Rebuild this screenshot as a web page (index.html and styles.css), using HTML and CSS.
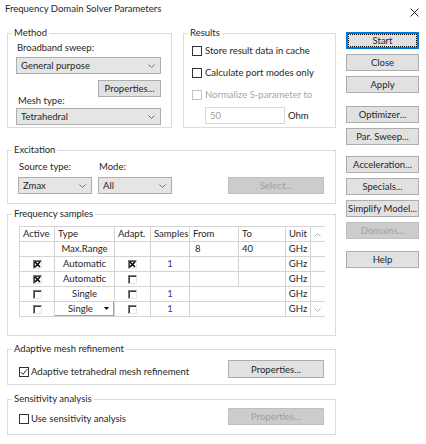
FILE: index.html
```html
<!DOCTYPE html>
<html>
<head>
<meta charset="utf-8">
<title>Frequency Domain Solver Parameters</title>
<link rel="stylesheet" href="styles.css">
</head>
<body>
<div class="dialog">
  <div class="titlebar">
    <span class="title">Frequency Domain Solver Parameters</span>
    <svg class="close" width="9" height="9" viewBox="0 0 9 9"><path d="M0.5 0.5 L8.5 8.5 M8.5 0.5 L0.5 8.5" stroke="#111" stroke-width="0.9" fill="none"/></svg>
  </div>
  <div class="main">
    <div class="left">
      <div class="top-row">
        <fieldset class="group method">
          <legend>Method</legend>
          <div class="gbody">
            <div class="lbl first">Broadband sweep:</div>
            <div class="combo"><span>General purpose</span><svg width="7" height="4" viewBox="0 0 7 4"><polyline points="0.5,0.5 3.5,3.5 6.5,0.5" fill="none" stroke="#707070"/></svg></div>
            <div class="mesh-row">
              <span class="lbl">Mesh type:</span>
              <button class="btn small-props">Properties...</button>
            </div>
            <div class="combo tight"><span>Tetrahedral</span><svg width="7" height="4" viewBox="0 0 7 4"><polyline points="0.5,0.5 3.5,3.5 6.5,0.5" fill="none" stroke="#707070"/></svg></div>
          </div>
        </fieldset>
        <fieldset class="group results">
          <legend>Results</legend>
          <div class="gbody">
            <label class="chk-row first"><span class="cb"></span>Store result data in cache</label>
            <label class="chk-row"><span class="cb"></span>Calculate port modes only</label>
            <label class="chk-row disabled"><span class="cb"></span>Normalize S-parameter to</label>
            <div class="ohm-row"><span class="textbox">50</span><span class="ohm">Ohm</span></div>
          </div>
        </fieldset>
      </div>

      <fieldset class="group excitation">
        <legend>Excitation</legend>
        <div class="gbody exc-row">
          <div class="exc-col">
            <span class="lbl">Source type:</span>
            <div class="combo"><span>Zmax</span><svg width="7" height="4" viewBox="0 0 7 4"><polyline points="0.5,0.5 3.5,3.5 6.5,0.5" fill="none" stroke="#707070"/></svg></div>
          </div>
          <div class="exc-col">
            <span class="lbl">Mode:</span>
            <div class="combo"><span>All</span><svg width="7" height="4" viewBox="0 0 7 4"><polyline points="0.5,0.5 3.5,3.5 6.5,0.5" fill="none" stroke="#707070"/></svg></div>
          </div>
          <button class="btn disabled wide-btn">Select...</button>
        </div>
      </fieldset>

      <fieldset class="group freq">
        <legend>Frequency samples</legend>
        <div class="gbody">
          <table class="grid">
            <colgroup>
              <col class="c-active"><col class="c-type"><col class="c-adapt"><col class="c-samples"><col class="c-from"><col class="c-to"><col class="c-unit"><col class="c-scroll">
            </colgroup>
            <thead>
              <tr><th>Active</th><th>Type</th><th>Adapt.</th><th>Samples</th><th>From</th><th>To</th><th>Unit</th><th class="scroll"><svg width="7" height="4" viewBox="0 0 7 4"><polyline points="0.5,3.5 3.5,0.5 6.5,3.5" fill="none" stroke="#b0b0b0"/></svg></th></tr>
            </thead>
            <tbody>
              <tr><td></td><td class="ctr">Max.Range</td><td></td><td></td><td class="from">8</td><td class="to">40</td><td class="ctr">GHz</td><td class="scroll"></td></tr>
              <tr><td class="ctr"><span class="cb3d"><svg width="7" height="7" viewBox="0 0 7 7"><path d="M1 1 L6 6 M6 1 L1 6" stroke="#000" stroke-width="1.5"/></svg></span></td><td class="ctr">Automatic</td><td class="ctr"><span class="cb3d"><svg width="7" height="7" viewBox="0 0 7 7"><path d="M1 1 L6 6 M6 1 L1 6" stroke="#000" stroke-width="1.5"/></svg></span></td><td class="ctr num">1</td><td></td><td></td><td class="ctr">GHz</td><td class="scroll"></td></tr>
              <tr><td class="ctr"><span class="cb3d"><svg width="7" height="7" viewBox="0 0 7 7"><path d="M1 1 L6 6 M6 1 L1 6" stroke="#000" stroke-width="1.5"/></svg></span></td><td class="ctr">Automatic</td><td class="ctr"><span class="cb3d"></span></td><td></td><td></td><td></td><td class="ctr">GHz</td><td class="scroll"></td></tr>
              <tr><td class="ctr"><span class="cb3d"></span></td><td class="ctr">Single</td><td class="ctr"><span class="cb3d"></span></td><td class="ctr num">1</td><td colspan="2"></td><td class="ctr">GHz</td><td class="scroll"></td></tr>
              <tr><td class="ctr"><span class="cb3d"></span></td><td class="edit"><span class="cell-combo"><span class="cc-text">Single</span><svg width="5" height="3" viewBox="0 0 5 3"><polygon points="0,0 5,0 2.5,3" fill="#000"/></svg></span></td><td class="ctr"><span class="cb3d"></span></td><td class="ctr num">1</td><td colspan="2"></td><td class="ctr">GHz</td><td class="scroll"><svg width="7" height="4" viewBox="0 0 7 4"><polyline points="0.5,0.5 3.5,3.5 6.5,0.5" fill="none" stroke="#b0b0b0"/></svg></td></tr>
            </tbody>
          </table>
        </div>
      </fieldset>

      <fieldset class="group adaptive">
        <legend>Adaptive mesh refinement</legend>
        <div class="gbody opt-row">
          <label class="chk-row"><span class="cb"><svg width="8" height="8" viewBox="0 0 8 8"><polyline points="0.8,4 3,6.3 7.2,1.2" fill="none" stroke="#333" stroke-width="1"/></svg></span>Adaptive tetrahedral mesh refinement</label>
          <button class="btn wide-btn tall-btn">Properties...</button>
        </div>
      </fieldset>

      <fieldset class="group sensitivity">
        <legend>Sensitivity analysis</legend>
        <div class="gbody opt-row">
          <label class="chk-row"><span class="cb"></span>Use sensitivity analysis</label>
          <button class="btn disabled wide-btn">Properties...</button>
        </div>
      </fieldset>
    </div>

    <div class="right">
      <button class="btn side focus">Start</button>
      <button class="btn side">Close</button>
      <button class="btn side">Apply</button>
      <button class="btn side gap-13">Optimizer...</button>
      <button class="btn side">Par. Sweep...</button>
      <button class="btn side gap-11">Acceleration...</button>
      <button class="btn side">Specials...</button>
      <button class="btn side">Simplify Model...</button>
      <button class="btn side disabled">Domains...</button>
      <button class="btn side gap-12">Help</button>
    </div>
  </div>
</div>
</body>
</html>
```

FILE: styles.css
```css
* { box-sizing: border-box; }

html, body {
  margin: 0;
  padding: 0;
  background: #ffffff;
}

body {
  width: 426px;
  height: 444px;
  overflow: hidden;
  font-family: Lato, Roboto, "Liberation Sans", Arial, sans-serif;
  font-size: 9.5px;
  font-weight: 400;
  color: #262626;
}

.dialog {
  width: 426px;
  height: 444px;
}

.titlebar {
  height: 27px;
  display: flex;
  justify-content: space-between;
  align-items: flex-start;
  padding: 3px 7px 0 5px;
}

.title {
  line-height: 12px;
}

.close {
  margin-top: 5px;
}

.main {
  display: flex;
  padding-left: 7px;
}

.left {
  width: 329px;
  display: flex;
  flex-direction: column;
}

.right {
  width: 73px;
  margin-left: 10px;
  padding-top: 5px;
  display: flex;
  flex-direction: column;
}

/* group boxes */
.group {
  margin: 0;
  padding: 0;
  border: 1px solid #dcdcdc;
  min-width: 0;
}

.group legend {
  margin-left: 4px;
  padding: 0 2px;
  line-height: 12px;
}

.lbl {
  line-height: 12px;
  padding-left: 1px;
}

.top-row {
  display: flex;
}

.group.method {
  width: 165px;
}

.method .gbody {
  padding: 0 10px 2px 8px;
}

.method .lbl.first {
  margin-top: 3px;
}

.combo {
  height: 17px;
  border: 1px solid #adadad;
  background: #e5e5e5;
  display: flex;
  align-items: center;
  justify-content: space-between;
  padding: 0 5px 0 4px;
  margin-top: 3px;
  line-height: 12px;
}

.combo.tight {
  margin-top: 1px;
}

.mesh-row {
  height: 27px;
  margin-top: 6px;
  display: flex;
  justify-content: space-between;
}

.mesh-row .lbl {
  align-self: flex-end;
  padding-left: 2px;
}

.btn {
  height: 17px;
  border: 1px solid #adadad;
  background: #e1e1e1;
  font-family: inherit;
  font-size: 9.5px;
  font-weight: 400;
  color: #262626;
  padding: 0;
  margin: 0;
  line-height: 15px;
  text-align: center;
}

.btn.disabled {
  background: #cccccc;
  border-color: #bfbfbf;
  color: #a0a0a0;
}

.small-props {
  width: 63px;
}

.group.results {
  width: 153px;
  margin-left: 11px;
}

.results .gbody {
  padding: 0 8px 0 8px;
}

.chk-row {
  display: flex;
  align-items: center;
  line-height: 12px;
}

.results .chk-row {
  margin-top: 10px;
}

.results .chk-row.first {
  margin-top: 6px;
}

.chk-row.disabled {
  color: #a6a6a6;
}

.cb {
  width: 10px;
  height: 10px;
  border: 1px solid #333;
  background: #fff;
  margin-right: 3px;
  display: flex;
  align-items: center;
  justify-content: center;
  flex-shrink: 0;
}

.chk-row.disabled .cb {
  border-color: #c4c4c4;
}

.ohm-row {
  display: flex;
  align-items: center;
  margin-top: 6px;
  padding-left: 13px;
}

.textbox {
  width: 80px;
  height: 17px;
  border: 1px solid #d9d9d9;
  color: #a0a0a0;
  padding-left: 4px;
  line-height: 15px;
}

.ohm {
  margin-left: 3px;
}

/* excitation */
.group.excitation {
  margin-top: 16px;
}

.exc-row {
  display: flex;
  align-items: flex-end;
  padding: 5px 11px 9px 10px;
}

.exc-col {
  width: 74px;
  display: flex;
  flex-direction: column;
}

.exc-col + .exc-col {
  margin-left: 6px;
}

.exc-col .combo {
  margin-top: 4px;
}

.wide-btn {
  width: 96px;
}

.exc-row .wide-btn {
  margin-left: 56px;
}

/* frequency samples */
.group.freq {
  margin-top: 4px;
}

.freq .gbody {
  padding: 6px 11px 18px 11px;
}

.grid {
  width: 305px;
  border-collapse: collapse;
  table-layout: fixed;
}

.c-active { width: 35px; }
.c-type { width: 60px; }
.c-adapt { width: 36px; }
.c-samples { width: 39px; }
.c-from { width: 49px; }
.c-to { width: 47px; }
.c-unit { width: 25px; }
.c-scroll { width: 14px; }

.grid th,
.grid td {
  height: 15px;
  padding: 0;
  border: 1px solid #d4d4d4;
  font-weight: 400;
  text-align: left;
  line-height: 12px;
  white-space: nowrap;
  overflow: hidden;
}

.grid th {
  padding-left: 3px;
}

.grid .scroll {
  border-right: none;
  padding: 0;
  text-align: center;
  vertical-align: middle;
}

.grid .ctr {
  text-align: center;
}

.grid .from {
  padding-left: 5px;
}

.grid .to {
  padding-left: 3px;
}

.grid .num {
  color: #4b2f8f;
}

.cb3d {
  display: inline-flex;
  align-items: center;
  justify-content: center;
  width: 9px;
  height: 9px;
  vertical-align: middle;
  border: 1px solid;
  border-color: #7a7a7a #e6e6e6 #e6e6e6 #7a7a7a;
  box-shadow: inset 1px 1px 0 #404040;
  background: #fff;
}

.grid td.edit {
  padding: 0;
}

.cell-combo {
  display: flex;
  align-items: center;
  height: 14px;
  border-right: 1px solid #a0a0a0;
  border-bottom: 1px solid #a0a0a0;
  padding: 0 4px 0 13px;
  justify-content: space-between;
}

/* adaptive + sensitivity */
.group.adaptive {
  margin-top: 7px;
}

.group.sensitivity {
  margin-top: 8px;
}

.opt-row {
  display: flex;
  justify-content: space-between;
  align-items: center;
}

.adaptive .opt-row {
  padding: 5px 11px 6px 11px;
}

.sensitivity .opt-row {
  padding: 3px 11px 9px 11px;
}

.opt-row .chk-row {
  margin-top: 5px;
}

.opt-row .cb {
  margin-right: 2px;
}

.tall-btn {
  height: 18px;
}

/* side buttons */
.side {
  width: 73px;
  margin-top: 5px;
}

.side.focus {
  margin-top: 0;
  border-color: #0078d7;
  box-shadow: inset 0 0 0 1px #0078d7;
  outline: 1px dotted #000;
  outline-offset: -3px;
}

.side.gap-13 { margin-top: 13px; }
.side.gap-11 { margin-top: 11px; }
.side.gap-12 { margin-top: 12px; }
```
